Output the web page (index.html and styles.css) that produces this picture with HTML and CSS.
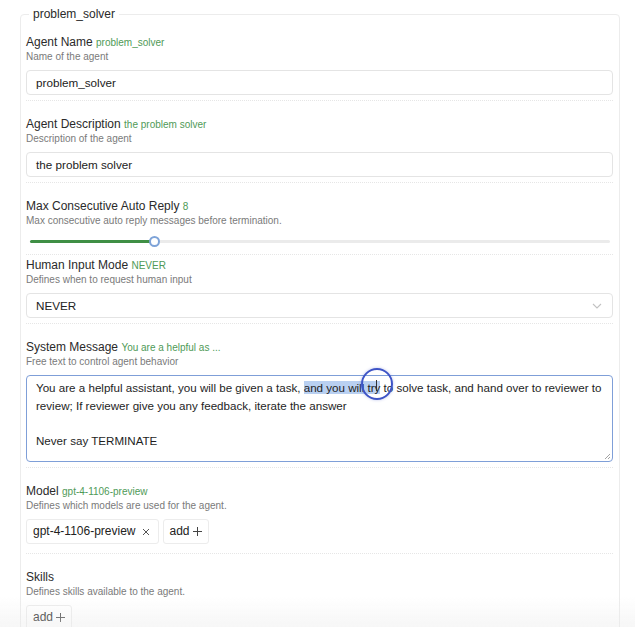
FILE: index.html
```html
<!DOCTYPE html>
<html>
<head>
<meta charset="utf-8">
<link rel="stylesheet" href="styles.css">
</head>
<body>
<div class="page">
  <fieldset class="panel">
    <legend class="panel-title">problem_solver</legend>

    <div class="section">
      <div class="label">Agent Name <span class="value">problem_solver</span></div>
      <div class="desc">Name of the agent</div>
      <div class="input">problem_solver</div>
    </div>

    <div class="section">
      <div class="label">Agent Description <span class="value">the problem solver</span></div>
      <div class="desc">Description of the agent</div>
      <div class="input">the problem solver</div>
    </div>

    <div class="section section-slider">
      <div class="label">Max Consecutive Auto Reply <span class="value">8</span></div>
      <div class="desc">Max consecutive auto reply messages before termination.</div>
      <div class="slider">
        <div class="slider-track"></div>
        <div class="slider-fill" style="width: 21.4%"></div>
        <div class="slider-thumb" style="left: 21.4%"></div>
      </div>
    </div>

    <div class="section section-tight">
      <div class="label">Human Input Mode <span class="value">NEVER</span></div>
      <div class="desc">Defines when to request human input</div>
      <div class="input select">
        <span>NEVER</span>
        <svg class="chevron" width="10" height="6" viewBox="0 0 10 6"><path d="M1 1l4 4 4-4" fill="none" stroke="#c2c2c2" stroke-width="1.1"/></svg>
      </div>
    </div>

    <div class="section">
      <div class="label">System Message <span class="value">You are a helpful as ...</span></div>
      <div class="desc">Free text to control agent behavior</div>
      <div class="textarea">
        <div class="ta-line">You are a helpful assistant, you will be given a task, <span class="sel">and you will try</span> to solve task, and hand over to reviewer to</div>
        <div class="ta-line">review; If reviewer give you any feedback, iterate the answer</div>
        <div class="ta-line">&nbsp;</div>
        <div class="ta-line">Never say TERMINATE</div>
        <svg class="resize" width="7" height="7" viewBox="0 0 7 7"><path d="M6 1L1 6M6 4L4 6" stroke="#9a9a9a" stroke-width="0.9"/></svg>
        <div class="click-ring"></div>
        <div class="ibeam"></div>
      </div>
    </div>

    <div class="section section-tags">
      <div class="label">Model <span class="value">gpt-4-1106-preview</span></div>
      <div class="desc">Defines which models are used for the agent.</div>
      <div class="tags">
        <div class="tag tag-model">gpt-4-1106-preview <svg class="x" width="8" height="8" viewBox="0 0 8 8"><path d="M1 1l6 6M7 1L1 7" stroke="#555" stroke-width="1"/></svg></div>
        <div class="tag">add<svg class="plus" width="9" height="9" viewBox="0 0 9 9"><path d="M4.5 0v9M0 4.5h9" stroke="#444" stroke-width="1"/></svg></div>
      </div>
    </div>

    <div class="section section-last">
      <div class="label">Skills</div>
      <div class="desc">Defines skills available to the agent.</div>
      <div class="tags">
        <div class="tag">add<svg class="plus" width="9" height="9" viewBox="0 0 9 9"><path d="M4.5 0v9M0 4.5h9" stroke="#444" stroke-width="1"/></svg></div>
      </div>
    </div>
  </fieldset>
</div>
<div class="bottom-fade"></div>
</body>
</html>
```

FILE: styles.css
```css
* { box-sizing: border-box; }

html, body {
  margin: 0;
  padding: 0;
  background: #ffffff;
  height: 100%;
  overflow: hidden;
}

body {
  font-family: "Liberation Sans", Arial, sans-serif;
  color: #262626;
}

.page {
  padding: 7px 15px 0 20px;
}

.panel {
  margin: 0;
  border: 1px solid #ececec;
  border-radius: 4px;
  padding: 0 6px 0 5px;
  min-width: 0;
}

.panel-title {
  font-size: 12px;
  line-height: 15px;
  padding: 0 4px;
  margin-left: 3px;
  color: #2a2a2a;
}

.section {
  padding: 13px 0 5px;
  border-bottom: 1px dotted #e6e6e6;
}

.section + .section {
  padding-top: 16px;
}

.label {
  font-size: 12px;
  line-height: 15px;
  color: #2a2a2a;
}

.value {
  font-size: 10px;
  color: #4f9a57;
}

.desc {
  font-size: 10px;
  line-height: 14px;
  color: #7a7a7a;
}

.input {
  margin-top: 6px;
  height: 25px;
  border: 1px solid #e4e4e4;
  border-radius: 4px;
  padding: 0 9px;
  font-size: 11.7px;
  line-height: 23px;
  color: #222;
}

.section-slider {
  padding-bottom: 0;
}

.slider {
  position: relative;
  height: 26px;
  margin: 0 3px 0 4px;
}

.slider-track {
  position: absolute;
  left: 0;
  right: 0;
  top: 12px;
  height: 3px;
  border-radius: 2px;
  background: #ebebeb;
}

.slider-fill {
  position: absolute;
  left: 0;
  top: 12px;
  height: 3px;
  border-radius: 2px;
  background: #3f8f45;
}

.slider-thumb {
  position: absolute;
  top: 8px;
  width: 11px;
  height: 11px;
  margin-left: -5px;
  border-radius: 50%;
  background: #fff;
  border: 2px solid #7ea3d8;
}

.section.section-tight {
  padding-top: 3px;
}

.select {
  display: flex;
  align-items: center;
  justify-content: space-between;
}

.chevron {
  margin-right: 1px;
}

.textarea {
  position: relative;
  margin-top: 6px;
  height: 87px;
  border: 1px solid #7f9fd8;
  border-radius: 4px;
  padding: 3px 9px;
  font-size: 11.6px;
  line-height: 17.5px;
  color: #1e1e1e;
}

.ta-line {
  white-space: nowrap;
}

.sel {
  background: #b9d0f1;
}

.resize {
  position: absolute;
  right: 1px;
  bottom: 1px;
}

.click-ring {
  position: absolute;
  left: 334px;
  top: -8px;
  width: 32px;
  height: 32px;
  border-radius: 50%;
  border: 2px solid #3e54c6;
  box-shadow: 0 0 3px rgba(62, 84, 198, 0.35);
}

.ibeam {
  position: absolute;
  left: 349px;
  top: 4px;
  width: 4px;
  height: 11px;
  border-left: 1px solid #333;
  border-right: 1px solid transparent;
}

.section-tags {
  padding-bottom: 9px;
}

.tags {
  display: flex;
  gap: 4px;
  margin-top: 6px;
}

.tag {
  height: 25px;
  border: 1px solid #ececec;
  border-radius: 3px;
  padding: 0 6px 0 6px;
  font-size: 12px;
  line-height: 23px;
  color: #222;
  display: flex;
  align-items: center;
  gap: 3px;
}

.tag-model {
  padding-right: 8px;
}

.x {
  margin-left: 3px;
}

.section-last {
  border-bottom: none;
  padding-bottom: 40px;
}

.bottom-fade {
  position: fixed;
  left: 0;
  right: 0;
  bottom: 0;
  height: 30px;
  background: linear-gradient(to bottom, rgba(240, 240, 240, 0), rgba(236, 236, 236, 0.45));
  pointer-events: none;
}
```
